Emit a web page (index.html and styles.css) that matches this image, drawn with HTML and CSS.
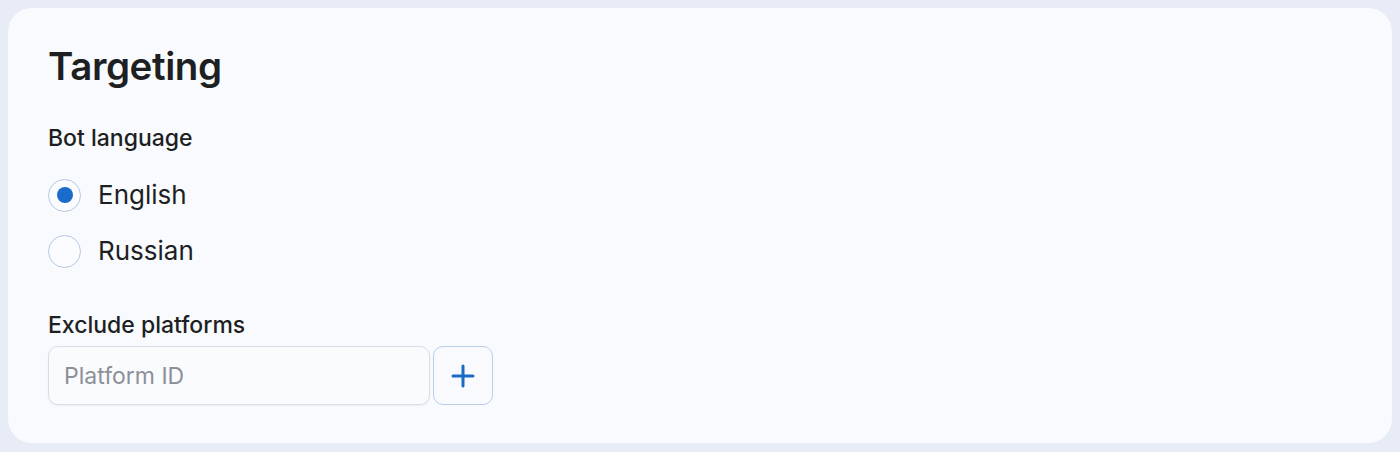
FILE: index.html
```html
<!DOCTYPE html>
<html lang="en">
<head>
    <meta charset="UTF-8">
    <meta name="viewport" content="width=device-width, initial-scale=1.0">
    <title>Targeting</title>
    <link rel="stylesheet" href="styles.css">
</head>
<body>
    <div class="card">
        <h1>Targeting</h1>

        <!-- Bot language -->
        <div class="field">
            <p class="field-label">Bot language</p>
            <label class="radio">
                <input type="radio" name="lang" value="en" checked>
                <span class="radio-mark"></span>
                <span class="radio-text">English</span>
            </label>
            <label class="radio">
                <input type="radio" name="lang" value="ru">
                <span class="radio-mark"></span>
                <span class="radio-text">Russian</span>
            </label>
        </div>

        <!-- Exclude platforms -->
        <div class="field field-platforms">
            <p class="field-label">Exclude platforms</p>
            <div class="add-row">
                <input type="text" class="text-input" placeholder="Platform ID">
                <button class="add-btn" type="button" aria-label="Add">
                    <svg width="24" height="24" viewBox="0 0 24 24" fill="none">
                        <path d="M12 2v20M2 12h20" stroke="#1b6bc6" stroke-width="3" stroke-linecap="round"/>
                    </svg>
                </button>
            </div>
        </div>
    </div>
</body>
</html>
```

FILE: styles.css
```css
* {
    margin: 0;
    padding: 0;
    box-sizing: border-box;
}

body {
    font-family: 'Inter', 'Noto Sans', sans-serif;
    background-color: #e7ecf6;
    padding: 8px;
    color: #1d1f23;
}

/* Main card */
.card {
    background-color: #f8fafd;
    border-radius: 24px;
    padding: 40px 40px 37px 40px;
    height: 435px;
}

h1 {
    font-size: 38.5px;
    font-weight: 600;
    line-height: 48px;
    letter-spacing: -0.4px;
    margin-top: -6px;
    margin-bottom: 34px;
}

.field-label {
    font-size: 23px;
    font-weight: 500;
    line-height: 28px;
    margin-bottom: 26px;
}

/* Radio buttons */
.radio {
    display: flex;
    align-items: center;
    gap: 17px;
    height: 34px;
    margin-bottom: 22px;
    cursor: pointer;
}

.radio input {
    display: none;
}

.radio-mark {
    width: 33px;
    height: 33px;
    border-radius: 50%;
    border: 1.5px solid #b3c8e6;
    background-color: #fbfcfe;
    display: flex;
    justify-content: center;
    align-items: center;
}

.radio input:checked + .radio-mark::after {
    content: '';
    width: 16px;
    height: 16px;
    border-radius: 50%;
    background-color: #1a6bcb;
}

.radio-text {
    font-size: 26px;
    line-height: 30px;
}

.field-platforms {
    margin-top: 43px;
}

.field-platforms .field-label {
    margin-bottom: 7px;
}

/* Input with add button */
.add-row {
    display: flex;
    gap: 3px;
}

.text-input {
    width: 382px;
    height: 59px;
    border: 1.5px solid #d9dee6;
    border-radius: 10px;
    background-color: #fafbfd;
    padding: 0 15px;
    font-family: inherit;
    font-size: 23px;
    color: #1d1f23;
    box-shadow: 0 1px 2px rgba(0, 0, 0, 0.06);
    outline: none;
}

.text-input::placeholder {
    color: #8b9099;
}

.add-btn {
    width: 60px;
    height: 59px;
    border: 1.5px solid #b7cdea;
    border-radius: 10px;
    background-color: #f8fafd;
    display: flex;
    justify-content: center;
    align-items: center;
    cursor: pointer;
}
```
